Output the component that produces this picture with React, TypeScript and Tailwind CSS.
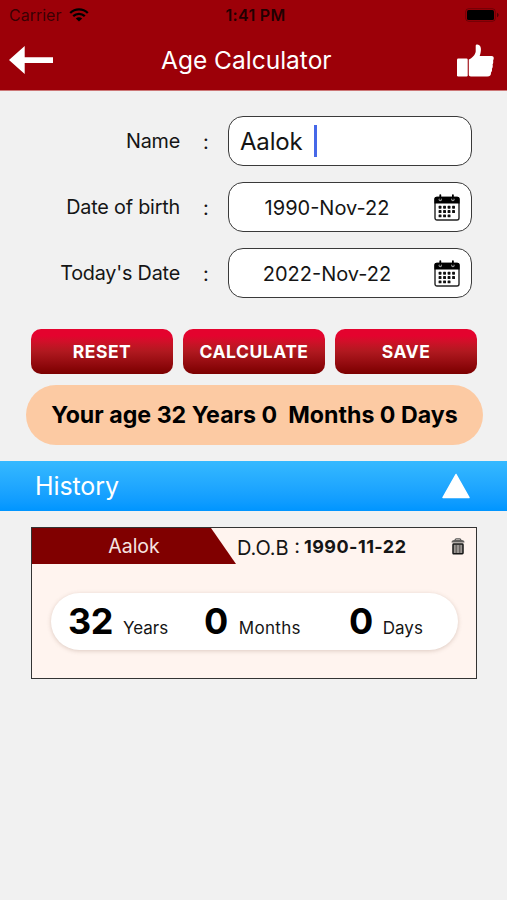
import React, { useState } from 'react';

interface HistoryEntry {
  id: string;
  name: string;
  dob: string;
  years: number;
  months: number;
  days: number;
}

const HISTORY: HistoryEntry[] = [
  { id: '1', name: 'Aalok', dob: '1990-11-22', years: 32, months: 0, days: 0 },
];

function WifiIcon() {
  return (
    <svg width="20" height="14" viewBox="0 0 20 14" fill="none" stroke="#000" strokeWidth="2.3">
      <path d="M1.2 5C6.2 .2 13.8 .2 18.8 5" />
      <path d="M4.2 8.2C7.6 5 12.4 5 15.8 8.2" />
      <path d="M10 13.6L6.8 10.4C8.7 8.7 11.3 8.7 13.2 10.4Z" fill="#000" stroke="none" />
    </svg>
  );
}

function BatteryIcon() {
  return (
    <svg width="35" height="14" viewBox="0 0 35 14">
      <rect x=".7" y=".7" width="29.6" height="12.6" rx="3" fill="none" stroke="#000" strokeOpacity=".3" />
      <rect x="2" y="2" width="27" height="10" rx="1.5" fill="#000" />
      <path d="M32 4.8C34.2 5.6 34.2 8.4 32 9.2Z" fill="#000" fillOpacity=".5" />
    </svg>
  );
}

function BackIcon() {
  return (
    <svg width="44" height="28" viewBox="0 0 44 28" fill="#fff">
      <path d="M0 14L15.7 0V11.2H44V17H15.7V28Z" />
    </svg>
  );
}

function ThumbIcon() {
  return (
    <svg width="37" height="33" viewBox="0 0 37 33" fill="#fff">
      <rect x="0" y="14.5" width="10.7" height="18" rx="1.2" />
      <path d="M11.8 15.5C15 14.2 18.3 10.8 18.7 7.4V1.8C18.7 .3 20.5 0 22 .9C24.4 2.4 24.6 6.6 22.7 12H34.5C36.3 12 37 13.3 36.7 14.8C36.5 15.8 36 16.3 36.2 17.2C36.4 18.5 36.2 19.6 35.6 20.4C36 22 35.8 23.6 34.9 24.7C35.2 26.3 34.9 27.6 34 28.6C34.2 31.2 33 32.5 30.3 32.5H14C12.5 32.5 11.8 31.8 11.8 30.5Z" />
    </svg>
  );
}

// Column and row of every day in the calendar icon
const DAYS = [
  [0, 0], [1, 0], [2, 0], [3, 0],
  [0, 1], [1, 1], [2, 1], [3, 1],
  [0, 2], [1, 2], [2, 2],
];

function CalendarIcon() {
  return (
    <svg width="26" height="27" viewBox="0 0 26 27">
      <rect x="1" y="3.5" width="24" height="22.5" rx="2" fill="#fff" stroke="#222" strokeWidth="1.4" />
      <path d="M.4 9.4V5Q.4 2.8 2.6 2.8H23.4Q25.6 2.8 25.6 5V9.4Z" fill="#000" />
      {[6.3, 18.9].map(x => (
        <g key={x}>
          <circle cx={x} cy="5.6" r="1.7" fill="#999" />
          <rect x={x - 0.9} y=".2" width="1.8" height="5.6" rx=".9" fill="#000" />
        </g>
      ))}
      {DAYS.map(([col, row]) => (
        <rect key={`${col}-${row}`} x={4.6 + col * 4.5} y={11.8 + row * 4.3} width="2.9" height="2.9" rx=".6" fill="#111" />
      ))}
    </svg>
  );
}

function TrashIcon() {
  return (
    <svg width="14" height="17" viewBox="0 0 14 17">
      <path d="M4.2 2Q4.2 .8 5.4 .8H8.6Q9.8 .8 9.8 2" fill="none" stroke="#555" strokeWidth="1.3" />
      <path d="M.5 4.6Q.5 2 3.2 2H10.8Q13.5 2 13.5 4.6Z" fill="#62605e" />
      <rect x="2" y="6" width="10" height="9.8" rx=".7" fill="#9a9592" stroke="#161616" strokeWidth="1.5" />
      <path d="M5.2 7V15M8.8 7V15" stroke="#55514f" strokeWidth="1" />
    </svg>
  );
}

interface FieldRowProps {
  label: string;
  children: React.ReactNode;
}

function FieldRow({ label, children }: FieldRowProps) {
  return (
    <div className="flex h-[50px] items-center">
      <span className="w-[180px] pt-px text-right text-[19.8px] tracking-[-0.2px]">{label}</span>
      <span className="w-12 pt-px pl-[23px] text-[20px]">:</span>
      <div className="flex h-[50px] w-[244px] items-center rounded-[15px] border-[1.5px] border-[#3a3a3a] bg-white">
        {children}
      </div>
    </div>
  );
}

function DateValue({ value }: { value: string }) {
  return (
    <>
      <span className="w-[196px] pt-px text-center text-[20px]">{value}</span>
      <button className="ml-[9px]">
        <CalendarIcon />
      </button>
    </>
  );
}

function ActionButton({ label }: { label: string }) {
  return (
    <button className="h-[45px] w-[142px] rounded-[10px] bg-linear-to-b from-[#e4032e] from-15% via-[#b0181f] via-50% to-[#7b0000] pt-px text-[17.5px] font-bold tracking-[0.5px] text-white">
      {label}
    </button>
  );
}

function HistoryCard({ entry }: { entry: HistoryEntry }) {
  return (
    <div className="h-[152px] w-[446px] border-[1.5px] border-[#333] bg-[#fff4ef]">
      <div className="flex h-[36px] items-center">
        <div className="flex h-[36px] w-[204px] items-center justify-center bg-[#800000] pt-[2px] text-[19.5px] text-[#f6e4e0] [clip-path:polygon(0_0,179px_0,100%_100%,0_100%)]">
          {entry.name}
        </div>
        <span className="w-[68px] pt-[3px] pl-px text-[20px] whitespace-nowrap">D.O.B :</span>
        <span className="w-[147px] pt-px text-[18px] font-bold tracking-[0.45px]">{entry.dob}</span>
        <button>
          <TrashIcon />
        </button>
      </div>

      <div className="mt-[29px] ml-[19px] flex h-[57px] w-[407px] items-center rounded-full bg-white pt-px pl-[17px] shadow-[0_1px_4px_rgba(120,80,60,0.25)]">
        <div className="flex w-[136px] items-baseline gap-[10px]">
          <span className="text-[36px] leading-none font-bold tracking-[-0.5px] text-black">{entry.years}</span>
          <span className="text-[17px]">Years</span>
        </div>
        <div className="flex w-[145px] items-baseline gap-[11px]">
          <span className="text-[36px] leading-none font-bold tracking-[-0.5px] text-black">{entry.months}</span>
          <span className="text-[17px] tracking-[0.3px]">Months</span>
        </div>
        <div className="flex items-baseline gap-[10px]">
          <span className="text-[36px] leading-none font-bold tracking-[-0.5px] text-black">{entry.days}</span>
          <span className="text-[17px]">Days</span>
        </div>
      </div>
    </div>
  );
}

export default function App() {
  const [isExpanded, setIsExpanded] = useState(true);

  return (
    <div className="flex h-[900px] w-[507px] flex-col overflow-hidden bg-[#f1f1f1] font-['Inter',sans-serif] text-[#151515]">
      {/* Status bar + title bar */}
      <header className="h-[91px] shrink-0 border-b border-[#c77] bg-[#9c0008]">
        <div className="grid h-[30px] grid-cols-3 items-center pr-[7px] pl-[9px] text-[16px] text-black">
          <div className="flex items-center gap-2 text-black/65">
            <span>Carrier</span>
            <WifiIcon />
          </div>
          <span className="pl-[2px] text-center font-semibold tracking-[0.3px] text-black/80">1:41 PM</span>
          <div className="flex justify-end">
            <BatteryIcon />
          </div>
        </div>
        <div className="flex h-[60px] items-center pr-[13px] pl-[9px]">
          <BackIcon />
          <h1 className="ml-[108px] grow text-[24.5px] text-white">Age Calculator</h1>
          <ThumbIcon />
        </div>
      </header>

      <section className="mt-[25px] flex flex-col gap-4">
        <FieldRow label="Name">
          <span className="ml-[11px] pt-[2px] text-[24px] tracking-[-0.2px]">Aalok</span>
          <span className="ml-3 h-8 w-[3px] bg-[#4668e8]" />
        </FieldRow>
        <FieldRow label="Date of birth">
          <DateValue value="1990-Nov-22" />
        </FieldRow>
        <FieldRow label="Today's Date">
          <DateValue value="2022-Nov-22" />
        </FieldRow>
      </section>

      <div className="mt-[31px] ml-[31px] flex gap-[10px]">
        <ActionButton label="RESET" />
        <ActionButton label="CALCULATE" />
        <ActionButton label="SAVE" />
      </div>

      <div className="mt-[11px] ml-[26px] flex h-[60px] w-[457px] items-center justify-center rounded-full bg-[#fccaa3] text-[23.2px] font-bold whitespace-pre text-black">
        {'Your age 32 Years 0  Months 0 Days'}
      </div>

      <button
        onClick={() => setIsExpanded(!isExpanded)}
        className="mt-4 flex h-[50px] shrink-0 items-center justify-between bg-linear-to-b from-[#35b9ff] to-[#0095ff] pr-[37px] pl-[35px] text-[25px] tracking-[-0.1px] text-white"
      >
        <span className="pt-[2px]">History</span>
        <svg width="28" height="26" viewBox="0 0 28 26" fill="#fff" stroke="#fff" strokeWidth="1.5" strokeLinejoin="round">
          <path d="M14 1.5L27 24.5H1Z" />
        </svg>
      </button>

      {/* Saved calculations */}
      {isExpanded && (
        <div className="mt-4 ml-[31px]">
          {HISTORY.map(entry => (
            <HistoryCard key={entry.id} entry={entry} />
          ))}
        </div>
      )}
    </div>
  );
}
